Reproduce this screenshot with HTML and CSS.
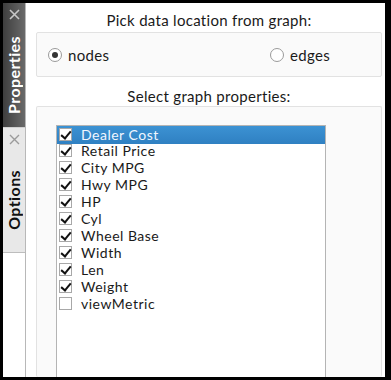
FILE: index.html
```html
<!DOCTYPE html>
<html>
<head>
<meta charset="utf-8">
<link rel="stylesheet" href="styles.css">
</head>
<body>
<div class="frame">
  <div class="tabs">
    <div class="tab tab-active">
      <svg class="close" width="11" height="11" viewBox="0 0 11 11"><path d="M1 1L10 10M10 1L1 10" stroke="#c8c8c8" stroke-width="1.6"/></svg>
      <div class="tab-label">Properties</div>
    </div>
    <div class="tab tab-inactive">
      <svg class="close" width="11" height="11" viewBox="0 0 11 11"><path d="M1 1L10 10M10 1L1 10" stroke="#9a9a9a" stroke-width="1.4"/></svg>
      <div class="tab-label">Options</div>
    </div>
    <div class="tab-rest"></div>
  </div>
  <div class="panel">
    <div class="heading h1">Pick data location from graph:</div>
    <div class="group radios">
      <label class="radio"><span class="radio-dot checked"></span>nodes</label>
      <label class="radio"><span class="radio-dot"></span>edges</label>
    </div>
    <div class="heading h2">Select graph properties:</div>
    <div class="group props">
      <div class="list">
        <div class="row selected"><span class="cb on"></span>Dealer Cost</div>
        <div class="row"><span class="cb on"></span>Retail Price</div>
        <div class="row"><span class="cb on"></span>City MPG</div>
        <div class="row"><span class="cb on"></span>Hwy MPG</div>
        <div class="row"><span class="cb on"></span>HP</div>
        <div class="row"><span class="cb on"></span>Cyl</div>
        <div class="row"><span class="cb on"></span>Wheel Base</div>
        <div class="row"><span class="cb on"></span>Width</div>
        <div class="row"><span class="cb on"></span>Len</div>
        <div class="row"><span class="cb on"></span>Weight</div>
        <div class="row"><span class="cb"></span>viewMetric</div>
      </div>
    </div>
  </div>
</div>
</body>
</html>
```
FILE: styles.css
```css
* { box-sizing: border-box; }
html, body { margin: 0; padding: 0; }
body {
  background: #000;
  width: 391px;
  height: 380px;
  overflow: hidden;
  font-family: Lato, "Open Sans", sans-serif;
  font-size: 15px;
  color: #1a1a1a;
}
.frame {
  display: flex;
  margin: 3px 6px 3px 3px;
  height: 374px;
  background: #fff;
}
.tabs {
  width: 23px;
  display: flex;
  flex-direction: column;
  border-right: 1px solid #b8b8b8;
  flex-shrink: 0;
}
.tab {
  position: relative;
  display: flex;
  flex-direction: column;
  align-items: center;
}
.tab-active {
  height: 124px;
  background: linear-gradient(to right, #3e3e3e, #6a6a6a);
}
.tab-inactive {
  height: 126px;
  background: #e8e8e8;
  border-top: 1px solid #d0d0d0;
  border-bottom: 1px solid #bdbdbd;
}
.tab-rest { flex: 1; background: #fff; }
.close { margin-top: 6px; }
.tab-label {
  writing-mode: vertical-rl;
  transform: rotate(180deg);
  font-weight: bold;
  font-size: 16px;
  letter-spacing: 0.4px;
  line-height: 20px;
}
.tab-active .tab-label { color: #fff; margin-top: 16px; }
.tab-inactive .tab-label { color: #111; margin-top: 25px; }
.panel {
  flex: 1;
  display: flex;
  flex-direction: column;
  padding: 0 3px 0 10px;
}
.heading {
  text-align: center;
  height: 18px;
  line-height: 18px;
  font-size: 15px;
  letter-spacing: 0.3px;
}
.h1 { margin-top: 8px; margin-bottom: 3px; }
.h2 { margin-top: 10px; margin-bottom: 1px; }
.group {
  background: #fafafa;
  border: 1px solid #e2e2e2;
  border-radius: 2px;
}
.radios {
  height: 45px;
  display: flex;
  align-items: center;
  justify-content: space-between;
  padding: 0 51px 0 11px;
  letter-spacing: 0.3px;
}
.radio { display: flex; align-items: center; }
.radio-dot {
  width: 14px; height: 14px;
  border-radius: 50%;
  border: 1px solid #9a9a9a;
  background: #fff;
  margin-right: 6px;
  position: relative;
}
.radio-dot.checked::after {
  content: "";
  position: absolute;
  left: 3px; top: 3px;
  width: 6px; height: 6px;
  border-radius: 50%;
  background: #333;
}
.props {
  flex: 1;
  padding: 18px 55px 0 19px;
  border-bottom: none;
}
.list {
  height: 100%;
  background: #fff;
  border: 1px solid #b4b4b4;
  border-bottom: none;
}
.row {
  height: 17px;
  line-height: 17px;
  font-size: 14px;
  letter-spacing: 0.5px;
  display: flex;
  align-items: center;
  padding-left: 2px;
  padding-bottom: 4px;
  white-space: nowrap;
}
.row.selected {
  background: linear-gradient(#3c92d3, #2f80c2);
  color: #f0f6ff;
  height: 18px;
  padding-bottom: 2px;
}
.cb {
  width: 13px; height: 13px;
  border: 1px solid #a8a8a8;
  background: #fff;
  margin-right: 9px;
  flex-shrink: 0;
  position: relative;
}
.cb.on::after {
  content: "";
  position: absolute;
  left: 3px; top: 0px;
  width: 4px; height: 8px;
  border: solid #111;
  border-width: 0 2px 2px 0;
  transform: rotate(40deg);
}
```
